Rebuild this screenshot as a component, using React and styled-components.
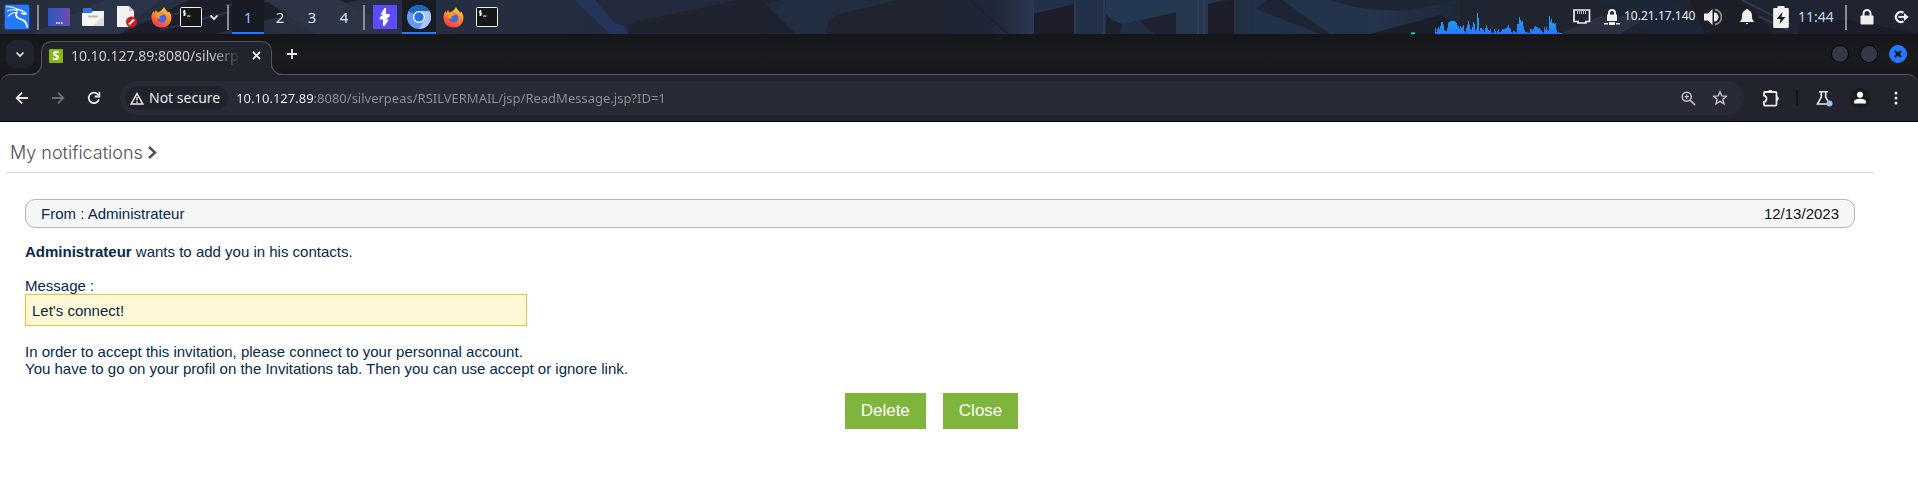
import React from 'react';
import styled, { createGlobalStyle, css } from 'styled-components';

const GlobalStyle = createGlobalStyle`
  *, *::before, *::after { box-sizing: border-box; }
  body { margin: 0; background: #fff; }
  button, input { font: inherit; color: inherit; }
  button { border: 0; padding: 0; background: none; cursor: pointer; }
  svg { display: block; flex: none; }
`;

const UI_FONT = '"Noto Sans", sans-serif';
const PAGE_FONT = '"Liberation Sans", Arial, sans-serif';

/* ---------- desktop panel ---------- */

const Panel = styled.header`
  position: relative;
  display: flex;
  align-items: stretch;
  justify-content: space-between;
  height: 34px;
  overflow: hidden;
  background: #1f2430;
  color: #fff;
  font-family: ${UI_FONT};
`;

const Wallpaper = styled.svg`
  position: absolute;
  inset: 0;
  width: 100%;
  height: 100%;
`;

const PanelGroup = styled.div`
  position: relative;
  display: flex;
  align-items: stretch;
`;

const PanelButton = styled.button`
  display: flex;
  align-items: center;
  justify-content: center;
  width: ${(p) => p.$width || 34}px;
  ${(p) => p.$active && css`
    background: #191b24;
    border-bottom: 2px solid #2777ff;
    padding-top: 2px;
  `}
`;

const Workspace = styled(PanelButton)`
  font-size: 15px;
  line-height: 20px;
  color: #dfe3ea;
  ${(p) => p.$active && css`color: #8cc4f4;`}
`;

const PanelSeparator = styled.span`
  width: 2px;
  margin: 5px 3px 4px;
  background: #8a8c92;
`;

const Address = styled.span`
  align-self: center;
  width: 74px;
  font-size: 12px;
  line-height: 16px;
  color: #eee;
  white-space: nowrap;
  padding-left: 2px;
  padding-bottom: 2px;
`;

const Clock = styled.time`
  align-self: center;
  width: 44px;
  font-size: 14px;
  line-height: 20px;
  color: #b9d8f2;
`;

/* ---------- browser window ---------- */

const TabStrip = styled.div`
  display: flex;
  align-items: center;
  height: 40px;
  padding: 0 11px 0 6px;
  background: linear-gradient(#15161a, #1a1b1f 60%, #17171c);
  color: #e6e7ea;
  font-family: ${UI_FONT};
`;

const TabSearch = styled.button`
  display: grid;
  place-items: center;
  width: 28px;
  height: 28px;
  border-radius: 10px;
  background: #21232d;
`;

const Tab = styled.div`
  position: relative;
  z-index: 1;
  align-self: flex-end;
  display: flex;
  align-items: center;
  width: 231px;
  height: 34px;
  margin: 0 0 -1px 7px;
  padding: 0 5px 6px 7px;
  background: #22242d;
  border: 1px solid #53555c;
  border-bottom: 0;
  border-radius: 10px 10px 0 0;

  &::before, &::after {
    content: '';
    position: absolute;
    bottom: 0;
    width: 11px;
    height: 11px;
    border: 0 solid #53555c;
    border-bottom-width: 1px;
  }
  &::before {
    left: -11px;
    border-right-width: 1px;
    border-bottom-right-radius: 11px;
    box-shadow: 4px 4px 0 #22242d;
  }
  &::after {
    right: -11px;
    border-left-width: 1px;
    border-bottom-left-radius: 11px;
    box-shadow: -4px 4px 0 #22242d;
  }
`;

const Favicon = styled.span`
  display: grid;
  place-items: center;
  flex: none;
  width: 14px;
  height: 14px;
  margin-right: 8px;
  border-radius: 1px;
  background: #86b90c;
  color: #fff;
  font-size: 12px;
  font-weight: 800;
  line-height: 14px;
`;

const TabTitle = styled.span`
  flex: 1;
  white-space: nowrap;
  font-size: 14px;
  line-height: 20px;
  color: #c9cbd0;
  mask-image: linear-gradient(90deg, #000 80%, transparent 98%);
`;

const StripButton = styled.button`
  display: grid;
  place-items: center;
  width: 20px;
  height: 20px;
`;

const NewTab = styled(StripButton)`
  margin-left: 10px;
`;

const WindowControls = styled.div`
  display: flex;
  gap: 11px;
  margin-left: auto;
`;

const WindowButton = styled.button`
  display: grid;
  place-items: center;
  width: 18px;
  height: 18px;
  border-radius: 50%;
  border: 1px solid ${(p) => (p.$close ? '#2777ff' : '#060608')};
  background: ${(p) => (p.$close ? '#2777ff' : '#343847')};
  color: #0c1222;
`;

const Toolbar = styled.div`
  display: flex;
  align-items: center;
  height: 48px;
  padding: 0 4px;
  background: #22242d;
  border-top: 1px solid #53555c;
  border-bottom: 1px solid #050507;
  border-radius: 10px 10px 0 0;
  color: #e6e7ea;
  font-family: ${UI_FONT};
`;

const BrowserFrame = styled.div`
  background: #17171c;
`;

const ToolButton = styled.button`
  display: grid;
  place-items: center;
  width: 36px;
  height: 34px;
  color: ${(p) => (p.$muted ? '#6c6e76' : 'inherit')};
`;

const Omnibox = styled.div`
  flex: 1;
  display: flex;
  align-items: center;
  height: 34px;
  margin: 0 9px 0 8px;
  padding: 0 8px 0 5px;
  border-radius: 17px;
  background: #282a35;
`;

const SecurityChip = styled.button`
  display: flex;
  align-items: center;
  gap: 5px;
  height: 24px;
  padding: 0 8px 0 5px;
  border-radius: 12px;
  background: #21232c;
  font-size: 14px;
  line-height: 20px;
`;

const UrlInput = styled.input`
  flex: 1;
  min-width: 0;
  height: 24px;
  margin-left: 8px;
  padding: 0;
  border: 0;
  outline: 0;
  font-size: 13px;
  line-height: 20px;
  color: #94969d;
  -webkit-text-fill-color: transparent;
  background: linear-gradient(90deg, #f4f5f7 78px, #8f9198 78px);
  background-clip: text;
`;

const OmniButton = styled(ToolButton)`
  width: 32px;
  color: #c3c4c8;
`;

const ToolDivider = styled.span`
  width: 2px;
  height: 16px;
  margin: 0 8px 0 7px;
  background: #14151b;
`;

/* ---------- mail page ---------- */

const Page = styled.main`
  padding: 15px 44px 60px 6px;
  background: #fff;
  color: #05294b;
  font-family: ${PAGE_FONT};
  font-size: 15px;
  line-height: 17px;
`;

const Breadcrumb = styled.nav`
  display: flex;
  align-items: center;
  gap: 5px;
  height: 36px;
  padding: 0 4px 4px;
  border-bottom: 1px solid #dadada;
  color: #505050;
`;

const BreadcrumbLink = styled.a`
  color: inherit;
  text-decoration: none;
  font-family: Inter, sans-serif;
  font-size: 18px;
  font-weight: 300;
  line-height: 24px;
`;

const Message = styled.article`
  padding: 26px 19px 0;
`;

const MessageHeader = styled.header`
  display: flex;
  align-items: center;
  justify-content: space-between;
  height: 29px;
  margin-bottom: 15px;
  padding: 0 15px;
  border: 1px solid #b5b5b5;
  border-radius: 10px;
  background: #f6f6f6;
`;

const MessageDate = styled.time`
  color: #111;
`;

const Paragraph = styled.p`
  margin: 0 0 ${(p) => (p.$tight ? 0 : 17)}px;
`;

const Quote = styled.blockquote`
  width: 502px;
  max-width: 100%;
  margin: 0 0 17px;
  padding: 7px 6px 6px;
  border: 1px solid #dfc92b;
  background: #fff8d7;
`;

const Actions = styled.div`
  display: flex;
  justify-content: center;
  gap: 17px;
  padding: 16px 17px 0 0;
`;

const ActionButton = styled.button`
  height: 36px;
  padding: 0 16px;
  background: #7fb53c;
  color: #fff;
  font-size: 17px;
  line-height: 20px;
`;

/* ---------- icons ---------- */

const Icon = ({ w = 16, h, box, children, ...rest }) => (
  <svg width={w} height={h || w} viewBox={box || `0 0 ${w} ${h || w}`} fill="none" aria-hidden="true" {...rest}>
    {children}
  </svg>
);

const KaliIcon = () => (
  <Icon w={28}>
    <rect x="1" y="1" width="26" height="26" rx="3" fill="#1c58c4" opacity=".55" />
    <rect x="2" y="2" width="24" height="24" rx="1" fill="#2779fb" />
    <path d="M3 3.500c5 0 8.500 1 11.500 3M4 8c4-1.500 7.500-1.500 10.500-.5M5 13.500c2.500-3 5.500-4.300 8.500-4" stroke="#fff" strokeWidth="1.100" />
    <path d="M13.500 6.300c3.500.4 7 1.700 9.500 4.400l-1.500.5-3.500-1.200" stroke="#fff" strokeWidth="1.600" />
    <path d="M14.500 8.500c-2.500 3-1.500 6 1.500 7 4 1.300 7.500 2.500 8.300 9" stroke="#fff" strokeWidth="1.800" />
  </Icon>
);

const DesktopIcon = () => (
  <Icon w={22} h={18}>
    <defs>
      <linearGradient id="desk" x1="0" y1="0" x2="1" y2="0">
        <stop stopColor="#2c58c0" /><stop offset="1" stopColor="#6e4cb0" />
      </linearGradient>
    </defs>
    <rect width="22" height="18" rx="1" fill="url(#desk)" />
    <path d="M8 15h1.500M10.500 15H12M13 15h1.500" stroke="#fff" strokeWidth="1.500" />
  </Icon>
);

const FolderIcon = () => (
  <Icon w={22} h={20}>
    <path d="M1 1h8l2 3h9a1 1 0 0 1 1 1v4H1z" fill="#2f74e0" />
    <path d="M0 6h9l2-2h11v14a1 1 0 0 1-1 1H1a1 1 0 0 1-1-1z" fill="#f4f4f4" />
    <path d="M22 8 11 19h10a1 1 0 0 0 1-1z" fill="#ddd" />
    <path d="M7 9.500h8" stroke="#b9b9b9" strokeWidth="2" strokeLinecap="round" />
  </Icon>
);

const DocumentIcon = () => (
  <Icon w={20} h={22}>
    <path d="M0 0h12l5 5v16H0z" fill="#f2f2f2" />
    <path d="M12 0l5 5h-5z" fill="#c4c4c4" />
    <circle cx="14.500" cy="16" r="5.500" fill="#cf1b1f" />
    <path d="m12 18.500 5-5" stroke="#fff" strokeWidth="2" />
  </Icon>
);

const FirefoxIcon = () => (
  <Icon w={21} h={22}>
    <defs>
      <linearGradient id="fox" x1=".8" y1="0" x2=".3" y2="1">
        <stop stopColor="#ffe03a" /><stop offset=".45" stopColor="#ff8a2a" /><stop offset="1" stopColor="#f4304f" />
      </linearGradient>
    </defs>
    <path d="M13 1c1 2.500 3 3.500 4 5.500l1-1c2.500 3 3 6.500 1.800 9.800A10 10 0 0 1 .7 13.500C0 10 1 7 2.500 5l.8 1.800L5 4l1.500 2.500C9 6 11.500 4 13 1z" fill="url(#fox)" />
    <circle cx="10.800" cy="12" r="4.600" fill="#4a68dc" />
    <path d="M4 7c3 0 5-.5 7 1l2-.2c-.8 1.500-2 1.500-3.500 2-1.700.6-1.300 2.200-.7 3.200-3-.5-5-3-4.800-6z" fill="#ff9a26" />
  </Icon>
);

const TerminalIcon = () => (
  <Icon w={22} h={20}>
    <rect x=".5" y=".5" width="21" height="19" rx="1" fill="#161719" stroke="#f0eee8" />
    <path d="M5.500 4H3.500v2h2v2H3M4.500 3v6M7 9h3.500" stroke="#fff" strokeWidth="1" />
  </Icon>
);

const Chevron = ({ size = 10 }) => (
  <Icon w={size} box="0 0 10 10"><path d="m1.500 3.500 3.500 3.500 3.500-3.500" stroke="currentColor" strokeWidth="1.700" /></Icon>
);

const BurpIcon = () => (
  <Icon w={24}>
    <rect width="24" height="24" fill="#5b4cff" />
    <path d="M11.500 3H13v6h4l-.5 2.500-3.500 3h3L11.500 21H10v-6.500H6.500L7 12l3.500-2.500H7.500z" fill="#fff" />
  </Icon>
);

const ChromiumIcon = () => (
  <Icon w={24}>
    <circle cx="12" cy="12" r="12" fill="#5f9bef" />
    <path d="M12 0a12 12 0 0 1 10.400 6H12a6 6 0 0 0-5.300 3L1.600 6A12 12 0 0 1 12 0z" fill="#1d64c8" />
    <path d="M12 6h10.400A12 12 0 0 1 12 24l5.200-9A6 6 0 0 0 12 6z" fill="#a9c8fa" />
    <circle cx="12" cy="12" r="6" fill="#fff" />
    <circle cx="12" cy="12" r="4.700" fill="#2372e8" />
  </Icon>
);

const LOAD = [
  6, 2, 5, 7, 5, 8, 12, 12, 9, 4, 3, 3, 6, 11, 12, 13, 13, 13, 13, 13, 12, 11, 8, 8, 5, 8, 6, 7, 9,
  3, 1, 6, 9, 13, 9, 5, 4, 7, 12, 10, 3, 5, 21, 16, 3, 6, 6, 5, 4, 2, 6, 9, 6, 4, 3, 5, 1, 1, 1, 5,
  3, 1, 3, 5, 2, 2, 3, 5, 5, 5, 5, 6, 7, 9, 6, 5, 2, 1, 3, 3, 2, 1, 10, 10, 17, 14, 12, 13, 7, 4, 2,
  2, 1, 1, 1, 5, 5, 3, 5, 7, 8, 7, 7, 5, 6, 4, 3, 2, 1, 7, 4, 7, 4, 3, 18, 12, 15, 11, 11, 10, 11, 4, 1,
  2, 1, 1, 1,
];

const LoadGraph = () => (
  <svg width="151" height="34" viewBox="0 0 151 34" role="img" aria-label="System load" shapeRendering="crispEdges">
    <defs>
      <linearGradient id="load" gradientUnits="userSpaceOnUse" x1="0" y1="12" x2="0" y2="34">
        <stop stopColor="#19b5e6" /><stop offset=".6" stopColor="#1f90f4" /><stop offset="1" stopColor="#2777ff" />
      </linearGradient>
    </defs>
    <rect x="0" y="32" width="4" height="1" fill="#0f7d78" />
    <rect x="0" y="33" width="4" height="1" fill="#1ef0d8" />
    <path d={LOAD.map((v, i) => `M${24 + i} 34v-${v}h1v${v}z`).join('')} fill="url(#load)" />
  </svg>
);

const EthernetIcon = () => (
  <Icon w={18} h={16}>
    <path d="M1 1h15.500v11.500H13v1.500H5v-1.500H1z" stroke="#eee" strokeWidth="1.700" />
    <path d="M4.500 2v3M6.500 2v3M8.500 2v3M10.500 2v3M12.500 2v3" stroke="#bbb" />
  </Icon>
);

const VpnIcon = () => (
  <Icon w={16} h={17}>
    <path d="M5 6V4a3 3 0 0 1 6 0v2" stroke="#eee" strokeWidth="2" />
    <path d="M3 5.500h10V12H3zM0 14h4v1.500H0zM5 13h6v3H5zM12 14h4v1.500h-4z" fill="#eee" />
  </Icon>
);

const VolumeIcon = () => (
  <Icon w={18}>
    <path d="M0 5.500h4L8.500 1v16L4 12.500H0z" fill="#eee" />
    <path d="M10 4.500a4.500 4.500 0 0 1 0 9z" fill="#eee" />
    <path d="M11 1.500a7.600 7.600 0 0 1 0 15" stroke="#8b8d92" strokeWidth="1.800" />
  </Icon>
);

const BellIcon = () => (
  <Icon w={14} h={16}>
    <path d="M7 0a1.500 1.500 0 0 1 1.500 1.300C11 2 12 4 12 7c0 3 .6 4.300 2 5.500V13H0v-.5C1.400 11.300 2 10 2 7c0-3 1-5 3.500-5.700A1.500 1.500 0 0 1 7 0zM5.500 14h3L7 15.500z" fill="#eee" />
  </Icon>
);

const BatteryIcon = () => (
  <Icon w={16} h={22}>
    <path d="M4.500 0h7v2H15a.8.800 0 0 1 .8.800v18.400a.8.800 0 0 1-.8.800H1a.8.800 0 0 1-.8-.8V2.800A.8.800 0 0 1 1 2h3.500z" fill="#f2f1ee" />
    <path d="M9.500 6 3.500 13h4L6.500 18l6-7h-4z" fill="#1c1e26" />
  </Icon>
);

const LockIcon = () => (
  <Icon w={14} h={16}>
    <path d="M3.500 7V4.500a3.500 3.500 0 0 1 7 0V7" stroke="#eee" strokeWidth="2" />
    <rect x=".5" y="6.500" width="13" height="9" rx="1" fill="#eee" />
  </Icon>
);

const LogoutIcon = () => (
  <Icon w={16} h={14}>
    <path d="M10.500 2.700a5 5 0 1 0 0 8.600" stroke="#eee" strokeWidth="2.200" />
    <path d="M5.500 7H13" stroke="#eee" strokeWidth="2.200" />
    <path d="M11 3 15.800 7 11 11z" fill="#eee" />
  </Icon>
);

const CloseIcon = ({ size = 9, width = 1.8 }) => (
  <Icon w={size} box="0 0 9 9"><path d="m1 1 7 7M8 1 1 8" stroke="currentColor" strokeWidth={width} /></Icon>
);

const PlusIcon = () => (
  <Icon w={12}><path d="M6 1v10M1 6h10" stroke="currentColor" strokeWidth="1.800" /></Icon>
);

const BackIcon = () => (
  <Icon w={14}><path d="M13 7H2M7 1.700 1.700 7 7 12.300" stroke="currentColor" strokeWidth="1.800" /></Icon>
);

const ForwardIcon = () => (
  <Icon w={14}><path d="M1 7h11M7 1.700 12.300 7 7 12.300" stroke="currentColor" strokeWidth="1.800" /></Icon>
);

const ReloadIcon = () => (
  <Icon w={14}>
    <path d="M12 8.200A5.200 5.200 0 1 1 10.800 3.400L12 4.600" stroke="currentColor" strokeWidth="1.800" />
    <path d="M12.400.800v4.700H7.700" stroke="currentColor" strokeWidth="1.800" />
  </Icon>
);

const WarningIcon = () => (
  <Icon w={14} h={13}>
    <path d="M7 1.600 12.800 12H1.200z" stroke="currentColor" strokeWidth="1.500" />
    <path d="M7 5v3.500M7 9.500V11" stroke="currentColor" strokeWidth="1.400" />
  </Icon>
);

const MagnifierIcon = () => (
  <Icon w={15}>
    <circle cx="5.700" cy="5.700" r="4.500" stroke="currentColor" strokeWidth="1.500" />
    <path d="m9 9 5 5" stroke="currentColor" strokeWidth="1.700" />
    <path d="M5.700 3.500v4.400M3.500 5.700h4.400" stroke="currentColor" strokeWidth="1.200" />
  </Icon>
);

const StarIcon = () => (
  <Icon w={16}>
    <path d="m8 1.800 1.800 4.100 4.500.4-3.400 3 1 4.400L8 11.400l-3.900 2.300 1-4.400-3.400-3 4.500-.4z" stroke="currentColor" strokeWidth="1.400" />
  </Icon>
);

const PuzzleIcon = () => (
  <Icon w={18}>
    <path d="M2.800 3h10.900a.8.800 0 0 1 .8.800v12a.8.800 0 0 1-.8.800H2.800a.8.800 0 0 1-.8-.8v-2.900c3.400-.3 3.400-5.900 0-6.200V3.800A.8.800 0 0 1 2.800 3z" stroke="currentColor" strokeWidth="1.800" />
    <path d="M6 3a2.300 2.300 0 0 1 4.600 0zM14.500 7.300a2.300 2.300 0 0 1 0 4.600z" fill="currentColor" />
  </Icon>
);

const FlaskIcon = () => (
  <Icon w={17}>
    <path d="M3 1.800h9M5.300 2v5L1.500 14h12L9.700 7V2" stroke="currentColor" strokeWidth="1.600" />
    <circle cx="13.500" cy="13.500" r="3" fill="#a3bffa" />
  </Icon>
);

const AvatarIcon = () => (
  <Icon w={20}>
    <circle cx="10" cy="10" r="10" fill="#1a1c1c" />
    <circle cx="10" cy="6.800" r="3" fill="#fff" />
    <path d="M4 15.500V14c0-2 3-3.200 6-3.200s6 1.200 6 3.200v1.500z" fill="#fff" />
  </Icon>
);

const MenuIcon = () => (
  <Icon w={4} h={14}>
    <circle cx="2" cy="2" r="1.500" fill="currentColor" />
    <circle cx="2" cy="7" r="1.500" fill="currentColor" />
    <circle cx="2" cy="12" r="1.500" fill="currentColor" />
  </Icon>
);

const CrumbArrow = () => (
  <Icon w={9} h={13}><path d="m1 1 6 5.500L1 12" stroke="currentColor" strokeWidth="2.500" /></Icon>
);

const PanelWallpaper = () => (
  <Wallpaper viewBox="0 0 1918 34" preserveAspectRatio="none" aria-hidden="true">
    <defs>
      <linearGradient id="wl" x1="0" x2="1" y1="0" y2="0">
        <stop stopColor="#252d3e" /><stop offset=".5" stopColor="#29303f" /><stop offset="1" stopColor="#222c3f" />
      </linearGradient>
      <linearGradient id="wm" x1="0" x2="1" y1="0" y2="0">
        <stop stopColor="#1f2430" /><stop offset=".55" stopColor="#1f2638" /><stop offset="1" stopColor="#2a3853" />
      </linearGradient>
      <linearGradient id="wr" x1="0" x2="1" y1="0" y2="0">
        <stop stopColor="#203048" /><stop offset=".6" stopColor="#24344d" /><stop offset="1" stopColor="#1e2839" />
      </linearGradient>
    </defs>
    <rect width="640" height="34" fill="url(#wl)" />
    <path d="M105 0h55l-40 34H30z" fill="#2b3549" />
    <path d="M120 34 190 0h170l-70 14-75 20z" fill="#1c1e29" />
    <path d="M135 22l60-12M160 30l70-18M225 5l60-5" stroke="#2c3342" strokeWidth="2" />
    <path d="M265 0h75l70 34h-95z" fill="#2c3445" />
    <path d="M420 0h60l50 34h-70z" fill="#252d40" />
    <path d="M575 0h20l28 25 5 9h-18z" fill="#26345b" />
    <path d="M595 0h140l-100 25q-15 4-25-7z" fill="#242a3e" />
    <path d="M628 34v-6q2-5 10-7L740 0h26l34 34z" fill="#1e232f" />
    <path d="M766 4 780 0h120l-60 14q-14 4-14 20h-30z" fill="#212e42" />
    <path d="M826 34q0-16 14-20L900 0h60l48 34z" fill="#1f2430" />
    <path d="M938 0h96v34h-90z" fill="url(#wm)" />
    <path d="M970 0l38 34" stroke="#1c2234" strokeWidth="2" />
    <path d="M1034 0h42v4l-42 10z" fill="#22314a" />
    <path d="M1034 14 1074 4v30h-40z" fill="#1d1e29" />
    <path d="M1074 0h32v34h-32z" fill="#22304a" />
    <path d="M1075 0v34M1104 0v34" stroke="#35435d" strokeWidth="1" />
    <path d="M1106 0h72v12l-54 12q-12-2-18-10z" fill="#243852" />
    <path d="M1106 15q6 8 18 9l54-12v22h-72z" fill="#1e2130" />
    <path d="M1122 24l18-3 14 13h-34z" fill="#1f2e42" />
    <path d="M1176 0h48l-16 4v30h-32z" fill="#26364f" />
    <path d="M1198 0v34M1204 0v34M1235 0v34" stroke="#3b4459" strokeWidth="1" />
    <path d="M1208 4l26-4v34h-26z" fill="#1d1e2a" />
    <path d="M1237 0h15v34h-15z" fill="#243044" />
    <path d="M1250 0h210v34h-210z" fill="url(#wr)" />
    <path d="M1256 9 1268 0h14l48 34h-10z" fill="#1d2434" />
    <path d="M1330 0h130l-50 10q-50 2-80-10z" fill="#1e2534" />
    <path d="M1370 34l70-19q12 4 18 19z" fill="#1c1f2a" />
    <path d="M1560 34l40-18 50 0-30 18z" fill="#2b3040" />
    <path d="M1590 0l40 12 20 22h60L1670 0z" fill="#1b2636" />
    <path d="M1690 0h55l30 34h-70z" fill="#1c1e28" />
    <path d="M1742 0l48 24M1758 16l30 14" stroke="#2c3b50" strokeWidth="2" />
    <path d="M1800 20h50l68 14h-120z" fill="#1b1e2a" />
  </Wallpaper>
);

/* ---------- page ---------- */

const workspaces = [1, 2, 3, 4];

export default function App() {
  return (
    <>
      <GlobalStyle />
      <Panel>
        <PanelWallpaper />
        <PanelGroup>
          <PanelButton aria-label="Applications"><KaliIcon /></PanelButton>
          <PanelSeparator />
          <PanelButton aria-label="Show desktop"><DesktopIcon /></PanelButton>
          <PanelButton aria-label="Files"><FolderIcon /></PanelButton>
          <PanelButton aria-label="Text editor"><DocumentIcon /></PanelButton>
          <PanelButton aria-label="Firefox"><FirefoxIcon /></PanelButton>
          <PanelButton aria-label="Terminal" $width={26}><TerminalIcon /></PanelButton>
          <PanelButton aria-label="More terminals" $width={20}><Chevron /></PanelButton>
          <PanelSeparator />
          {workspaces.map((n) => (
            <Workspace key={n} $width={32} $active={n === 1}>{n}</Workspace>
          ))}
          <PanelSeparator />
          <PanelButton aria-label="Burp Suite"><BurpIcon /></PanelButton>
          <PanelButton aria-label="Chromium" $active><ChromiumIcon /></PanelButton>
          <PanelButton aria-label="Firefox window"><FirefoxIcon /></PanelButton>
          <PanelButton aria-label="Terminal window"><TerminalIcon /></PanelButton>
        </PanelGroup>
        <PanelGroup>
          <LoadGraph />
          <PanelButton aria-label="Network" $width={40}><EthernetIcon /></PanelButton>
          <PanelButton aria-label="VPN" $width={20}><VpnIcon /></PanelButton>
          <Address>10.21.17.140</Address>
          <PanelButton aria-label="Volume"><VolumeIcon /></PanelButton>
          <PanelButton aria-label="Notifications"><BellIcon /></PanelButton>
          <PanelButton aria-label="Battery"><BatteryIcon /></PanelButton>
          <Clock>11:44</Clock>
          <PanelSeparator />
          <PanelButton aria-label="Lock screen"><LockIcon /></PanelButton>
          <PanelButton aria-label="Log out"><LogoutIcon /></PanelButton>
        </PanelGroup>
      </Panel>

      <BrowserFrame>
        <TabStrip>
          <TabSearch aria-label="Search tabs"><Chevron /></TabSearch>
          <Tab>
            <Favicon>S</Favicon>
            <TabTitle>10.10.127.89:8080/silverp</TabTitle>
            <StripButton aria-label="Close tab"><CloseIcon /></StripButton>
          </Tab>
          <NewTab aria-label="New tab"><PlusIcon /></NewTab>
          <WindowControls>
            <WindowButton aria-label="Minimize" />
            <WindowButton aria-label="Maximize" />
            <WindowButton aria-label="Close window" $close>
              <CloseIcon size={8} width={2.4} />
            </WindowButton>
          </WindowControls>
        </TabStrip>
        <Toolbar>
          <ToolButton aria-label="Back"><BackIcon /></ToolButton>
          <ToolButton aria-label="Forward" $muted><ForwardIcon /></ToolButton>
          <ToolButton aria-label="Reload"><ReloadIcon /></ToolButton>
          <Omnibox>
            <SecurityChip><WarningIcon />Not secure</SecurityChip>
            <UrlInput
              type="text"
              aria-label="Address"
              defaultValue="10.10.127.89:8080/silverpeas/RSILVERMAIL/jsp/ReadMessage.jsp?ID=1"
            />
            <OmniButton aria-label="Zoom"><MagnifierIcon /></OmniButton>
            <OmniButton aria-label="Bookmark"><StarIcon /></OmniButton>
          </Omnibox>
          <ToolButton aria-label="Extensions"><PuzzleIcon /></ToolButton>
          <ToolDivider />
          <ToolButton aria-label="Labs"><FlaskIcon /></ToolButton>
          <ToolButton aria-label="Profile"><AvatarIcon /></ToolButton>
          <ToolButton aria-label="Menu"><MenuIcon /></ToolButton>
        </Toolbar>
      </BrowserFrame>

      <Page>
        <Breadcrumb aria-label="Breadcrumb">
          <BreadcrumbLink href="#notifications">My notifications</BreadcrumbLink>
          <CrumbArrow />
        </Breadcrumb>
        <Message>
          <MessageHeader>
            <span>From : Administrateur</span>
            <MessageDate dateTime="2023-12-13">12/13/2023</MessageDate>
          </MessageHeader>
          <Paragraph><b>Administrateur</b> wants to add you in his contacts.</Paragraph>
          <Paragraph $tight>Message :</Paragraph>
          <Quote>Let's connect!</Quote>
          <Paragraph $tight>
            In order to accept this invitation, please connect to your personnal account.
            <br />
            You have to go on your profil on the Invitations tab. Then you can use accept or ignore link.
          </Paragraph>
          <Actions>
            <ActionButton type="button">Delete</ActionButton>
            <ActionButton type="button">Close</ActionButton>
          </Actions>
        </Message>
      </Page>
    </>
  );
}
